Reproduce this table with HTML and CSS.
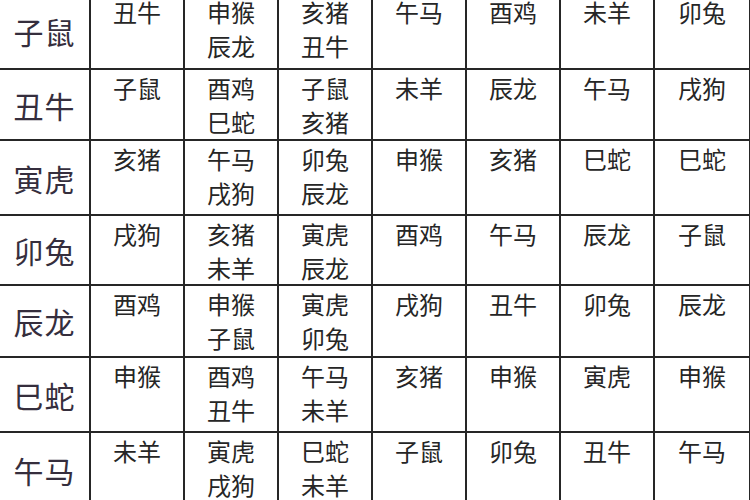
FILE: index.html
```html
<!DOCTYPE html>
<html lang="zh">
<head>
<meta charset="utf-8">
<link rel="stylesheet" href="styles.css">
</head>
<body>
<div class="grid">
  <div class="hd">子鼠</div><div class="c">丑牛</div><div class="c">申猴<br>辰龙</div><div class="c">亥猪<br>丑牛</div><div class="c">午马</div><div class="c">酉鸡</div><div class="c">未羊</div><div class="c">卯兔</div>
  <div class="hd">丑牛</div><div class="c">子鼠</div><div class="c">酉鸡<br>巳蛇</div><div class="c">子鼠<br>亥猪</div><div class="c">未羊</div><div class="c">辰龙</div><div class="c">午马</div><div class="c">戌狗</div>
  <div class="hd">寅虎</div><div class="c">亥猪</div><div class="c">午马<br>戌狗</div><div class="c">卯兔<br>辰龙</div><div class="c">申猴</div><div class="c">亥猪</div><div class="c">巳蛇</div><div class="c">巳蛇</div>
  <div class="hd">卯兔</div><div class="c">戌狗</div><div class="c">亥猪<br>未羊</div><div class="c">寅虎<br>辰龙</div><div class="c">酉鸡</div><div class="c">午马</div><div class="c">辰龙</div><div class="c">子鼠</div>
  <div class="hd">辰龙</div><div class="c">酉鸡</div><div class="c">申猴<br>子鼠</div><div class="c">寅虎<br>卯兔</div><div class="c">戌狗</div><div class="c">丑牛</div><div class="c">卯兔</div><div class="c">辰龙</div>
  <div class="hd">巳蛇</div><div class="c">申猴</div><div class="c">酉鸡<br>丑牛</div><div class="c">午马<br>未羊</div><div class="c">亥猪</div><div class="c">申猴</div><div class="c">寅虎</div><div class="c">申猴</div>
  <div class="hd">午马</div><div class="c">未羊</div><div class="c">寅虎<br>戌狗</div><div class="c">巳蛇<br>未羊</div><div class="c">子鼠</div><div class="c">卯兔</div><div class="c">丑牛</div><div class="c">午马</div>
</div>
</body>
</html>
```

FILE: styles.css
```css
html, body {
  margin: 0;
  padding: 0;
  background: #ffffff;
  overflow: hidden;
  width: 750px;
  height: 500px;
}

.grid {
  display: grid;
  grid-template-columns: 89px repeat(6, 92px) 94px;
  grid-template-rows: 74px 69px 73px 68px 70px 73px 73px;
  gap: 2px;
  padding: 2px;
  margin: -8px 0 0 -2px;
  width: max-content;
  background: #262626;
  font-family: "Noto Sans CJK SC", "Noto Sans", sans-serif;
}

.grid > div {
  background: #ffffff;
}

.hd {
  display: flex;
  align-items: center;
  justify-content: center;
  font-size: 30px;
  color: #352e3d;
  letter-spacing: 1px;
}

.c {
  text-align: center;
  font-size: 24px;
  line-height: 34px;
  padding-top: 1px;
  color: #262626;
}
```
